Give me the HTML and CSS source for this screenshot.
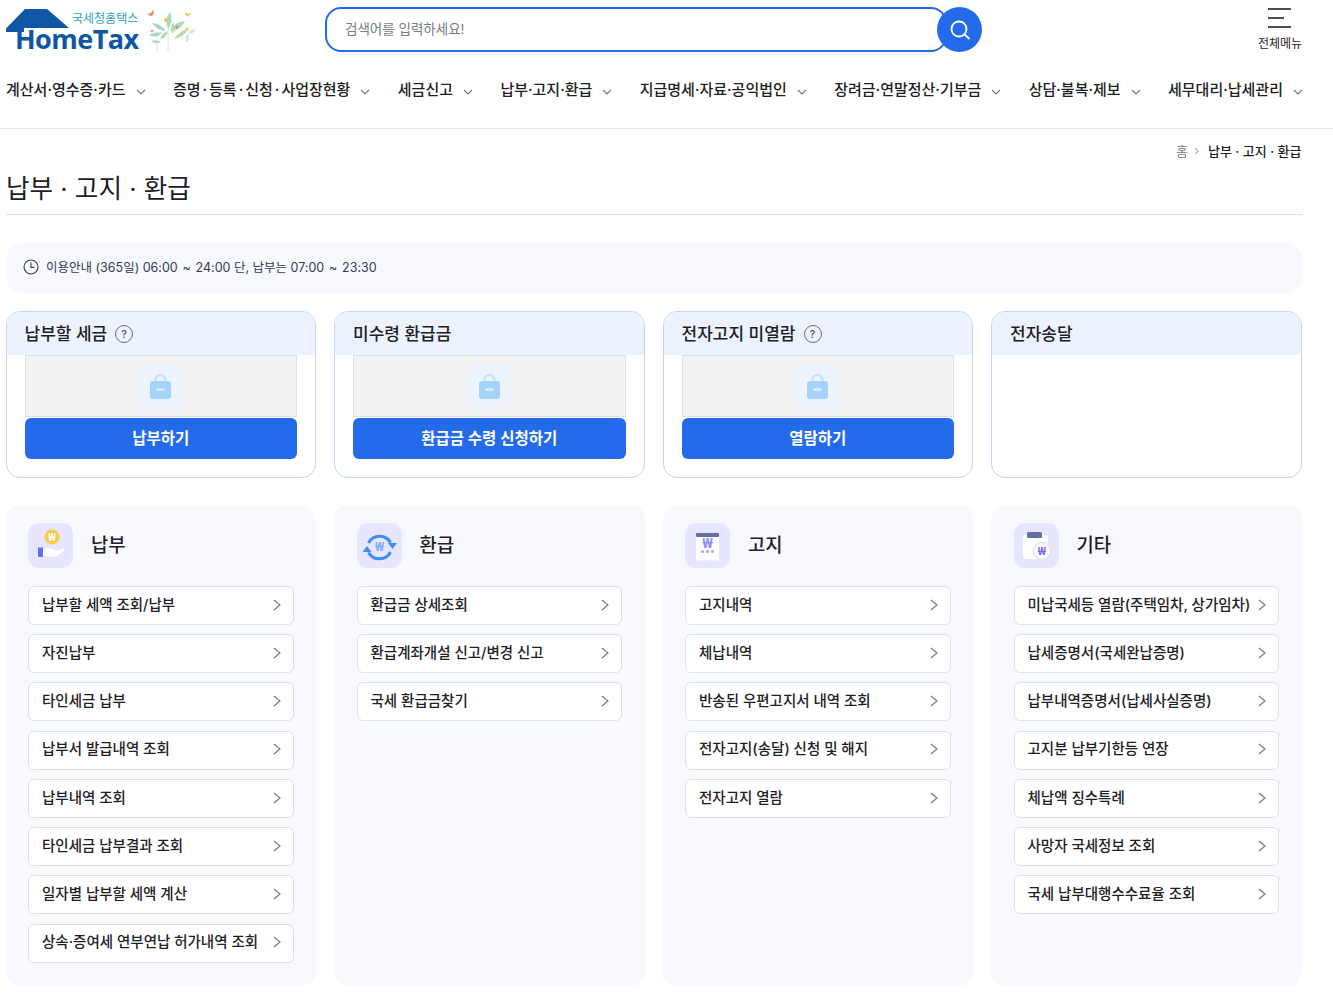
FILE: index.html
```html
<!DOCTYPE html>
<html lang="ko">
<head>
<meta charset="utf-8">
<title>납부 · 고지 · 환급</title>
<link rel="stylesheet" href="styles.css">
</head>
<body>
<header class="site-header">
  <div class="top-row">
    <a class="logo">
      <svg class="logo-roof" width="64" height="24" viewBox="0 0 64 24"><path d="M0 19.500 L19 0 H41 L63 19 H18 V23 H0 Z" fill="#0f56a5"/></svg>
      <span class="logo-sub">국세청홈택스</span>
      <span class="logo-main">HomeTax</span>
      <svg class="logo-plant" width="52" height="44" viewBox="0 0 52 44">
        <path d="M1 5 Q6 5 7 0 Q9 5 6 7 Q3 7 1 5Z" fill="#e58d6f"/>
        <path d="M39 3 Q42 6 45 4 Q43 8 41 7 Q39 6 39 3Z" fill="#f3c64c"/>
        <g fill="none" stroke="#d8e8e0" stroke-width="1"><path d="M22 42V20"/><path d="M36 30V18"/><path d="M11 42V24"/></g>
        <g fill="#a9d8c4"><path d="M6 14 Q14 14 20 22 Q12 22 6 14Z"/><path d="M22 20 Q18 10 24 3 Q28 12 22 20Z"/><path d="M24 22 Q30 12 39 12 Q34 22 24 22Z"/><path d="M3 26 Q10 22 16 24 Q10 30 3 26Z"/><path d="M5 32 Q11 30 15 33 Q10 36 5 32Z"/></g>
        <g fill="#b5d9a7"><path d="M14 30 Q16 24 22 22 Q20 29 14 30Z"/><path d="M28 30 Q34 22 42 20 Q38 28 28 30Z"/><path d="M26 25 Q24 18 27 13 Q31 19 26 25Z"/><path d="M40 34 Q38 28 42 24 Q45 30 40 34Z" fill="#cfe9e3"/><path d="M42 24 Q46 20 50 20 Q47 26 42 24Z" fill="#cfe9e3"/></g>
        <circle cx="20" cy="11" r="2" fill="#f2c344"/><circle cx="31" cy="18" r="1.6" fill="#e6877c"/><circle cx="41" cy="20" r="1.6" fill="#f2c344"/><circle cx="6" cy="22" r="1.6" fill="#d9a9c9"/>
      </svg>
    </a>
    <form class="search">
      <div class="search-box">검색어를 입력하세요!</div>
      <button class="search-btn" type="button" aria-label="검색">
        <svg width="24" height="24" viewBox="0 0 24 24" fill="none" stroke="#fff" stroke-width="1.8" stroke-linecap="round"><circle cx="11" cy="11" r="7.5"/><path d="M16.8 16.8L21 20.5"/></svg>
      </button>
    </form>
    <a class="all-menu">
      <svg width="24" height="20" viewBox="0 0 24 20" stroke="#222" stroke-width="1.6"><path d="M0 1H23"/><path d="M0 10H16"/><path d="M0 19H23"/></svg>
      <span>전체메뉴</span>
    </a>
  </div>
  <nav class="gnb">
    <a>계산서·영수증·카드<svg class="chev" viewBox="0 0 10 6"><path d="M1 1L5 5L9 1"/></svg></a>
    <a>증명<span class="dot">·</span>등록<span class="dot">·</span>신청<span class="dot">·</span>사업장현황<svg class="chev" viewBox="0 0 10 6"><path d="M1 1L5 5L9 1"/></svg></a>
    <a>세금신고<svg class="chev" viewBox="0 0 10 6"><path d="M1 1L5 5L9 1"/></svg></a>
    <a>납부·고지·환급<svg class="chev" viewBox="0 0 10 6"><path d="M1 1L5 5L9 1"/></svg></a>
    <a>지급명세·자료·공익법인<svg class="chev" viewBox="0 0 10 6"><path d="M1 1L5 5L9 1"/></svg></a>
    <a>장려금·연말정산·기부금<svg class="chev" viewBox="0 0 10 6"><path d="M1 1L5 5L9 1"/></svg></a>
    <a>상담·불복·제보<svg class="chev" viewBox="0 0 10 6"><path d="M1 1L5 5L9 1"/></svg></a>
    <a>세무대리·납세관리<svg class="chev" viewBox="0 0 10 6"><path d="M1 1L5 5L9 1"/></svg></a>
  </nav>
</header>
<main class="page">
  <div class="crumbs"><span class="home">홈</span><svg class="crumb-sep" viewBox="0 0 6 8"><path d="M1 1L4.5 4L1 7"/></svg><strong>납부 · 고지 · 환급</strong></div>
  <h1 class="page-title">납부 · 고지 · 환급</h1>
  <div class="notice">
    <svg width="16" height="16" viewBox="0 0 16 16" fill="none" stroke="#333c50" stroke-width="1.1"><circle cx="8" cy="8" r="7"/><path d="M8 3.6V8.4H11.4"/></svg>
    <span>이용안내 (365일) 06:00 <span class="tilde">~</span> 24:00 단, 납부는 07:00 <span class="tilde">~</span> 23:30</span>
  </div>
  <section class="summary">
    <article class="sum-card">
      <h2 class="sum-head">납부할 세금<span class="help">?</span></h2>
      <div class="sum-body">
        <div class="locked"><span class="lock"><svg width="21" height="26" viewBox="0 0 21 26"><path d="M5.5 10V7a5 5 0 0 1 10 0v3" fill="none" stroke="#c6e3f7" stroke-width="2.5"/><rect y="8" width="21" height="18" rx="3" fill="#a3d2fa"/><rect x="6" y="15" width="9" height="3" rx="1.5" fill="#d5eafc"/></svg></span></div>
        <a class="primary">납부하기</a>
      </div>
    </article>
    <article class="sum-card">
      <h2 class="sum-head">미수령 환급금</h2>
      <div class="sum-body">
        <div class="locked"><span class="lock"><svg width="21" height="26" viewBox="0 0 21 26"><path d="M5.5 10V7a5 5 0 0 1 10 0v3" fill="none" stroke="#c6e3f7" stroke-width="2.5"/><rect y="8" width="21" height="18" rx="3" fill="#a3d2fa"/><rect x="6" y="15" width="9" height="3" rx="1.5" fill="#d5eafc"/></svg></span></div>
        <a class="primary">환급금 수령 신청하기</a>
      </div>
    </article>
    <article class="sum-card">
      <h2 class="sum-head">전자고지 미열람<span class="help">?</span></h2>
      <div class="sum-body">
        <div class="locked"><span class="lock"><svg width="21" height="26" viewBox="0 0 21 26"><path d="M5.5 10V7a5 5 0 0 1 10 0v3" fill="none" stroke="#c6e3f7" stroke-width="2.5"/><rect y="8" width="21" height="18" rx="3" fill="#a3d2fa"/><rect x="6" y="15" width="9" height="3" rx="1.5" fill="#d5eafc"/></svg></span></div>
        <a class="primary">열람하기</a>
      </div>
    </article>
    <article class="sum-card">
      <h2 class="sum-head">전자송달</h2>
    </article>
  </section>
  <section class="panels">
    <article class="panel">
      <div class="panel-head">
        <span class="panel-icon"><svg width="45" height="45" viewBox="0 0 45 45">
          <circle cx="24" cy="14" r="7.5" fill="#fcc94f"/><text x="24" y="17.500" class="won won-w">₩</text>
          <rect x="10" y="24.500" width="5" height="9.500" fill="#5f73f1"/>
          <path d="M15 26 Q20 24.500 25 26.500 L29 27.500 L35.500 25.500 Q37 26 35.500 28 Q30 33 25 34 Q20 33.500 15 33Z" fill="#fff"/>
        </svg></span>
        <h3>납부</h3>
      </div>
      <ul class="links">
        <li><a>납부할 세액 조회/납부<svg class="arr" viewBox="0 0 8 12"><path d="M1 1L7 6L1 11"/></svg></a></li>
        <li><a>자진납부<svg class="arr" viewBox="0 0 8 12"><path d="M1 1L7 6L1 11"/></svg></a></li>
        <li><a>타인세금 납부<svg class="arr" viewBox="0 0 8 12"><path d="M1 1L7 6L1 11"/></svg></a></li>
        <li><a>납부서 발급내역 조회<svg class="arr" viewBox="0 0 8 12"><path d="M1 1L7 6L1 11"/></svg></a></li>
        <li><a>납부내역 조회<svg class="arr" viewBox="0 0 8 12"><path d="M1 1L7 6L1 11"/></svg></a></li>
        <li><a>타인세금 납부결과 조회<svg class="arr" viewBox="0 0 8 12"><path d="M1 1L7 6L1 11"/></svg></a></li>
        <li><a>일자별 납부할 세액 계산<svg class="arr" viewBox="0 0 8 12"><path d="M1 1L7 6L1 11"/></svg></a></li>
        <li><a>상속·증여세 연부연납 허가내역 조회<svg class="arr" viewBox="0 0 8 12"><path d="M1 1L7 6L1 11"/></svg></a></li>
      </ul>
    </article>
    <article class="panel">
      <div class="panel-head">
        <span class="panel-icon"><svg width="45" height="45" viewBox="0 0 45 45" fill="none">
          <path d="M11.500 20 A12.500 12.500 0 0 1 33.500 19.500" stroke="#3e8df0" stroke-width="3"/>
          <path d="M33.500 29 A12.500 12.500 0 0 1 11.500 29.500" stroke="#3e8df0" stroke-width="3"/>
          <path d="M31 20H40L35.500 26Z" fill="#3e8df0"/><path d="M5.500 29H14.500L10 23Z" fill="#3e8df0"/>
          <text x="22.500" y="28" class="won won-b">₩</text>
        </svg></span>
        <h3>환급</h3>
      </div>
      <ul class="links">
        <li><a>환급금 상세조회<svg class="arr" viewBox="0 0 8 12"><path d="M1 1L7 6L1 11"/></svg></a></li>
        <li><a>환급계좌개설 신고/변경 신고<svg class="arr" viewBox="0 0 8 12"><path d="M1 1L7 6L1 11"/></svg></a></li>
        <li><a>국세 환급금찾기<svg class="arr" viewBox="0 0 8 12"><path d="M1 1L7 6L1 11"/></svg></a></li>
      </ul>
    </article>
    <article class="panel">
      <div class="panel-head">
        <span class="panel-icon"><svg width="45" height="45" viewBox="0 0 45 45">
          <path d="M11 10H34V38L31 36.500 28 38 25 36.500 22 38 19 36.500 16 38 13 36.500 11 38Z" fill="#fff"/>
          <rect x="11" y="10" width="23" height="4" rx="1" fill="#666da3"/>
          <text x="22.500" y="25" class="won won-p">₩</text>
          <circle cx="17.500" cy="28.500" r="1.500" fill="#a9a4f6"/><circle cx="22.500" cy="28.500" r="1.500" fill="#a9a4f6"/><circle cx="27.500" cy="28.500" r="1.500" fill="#a9a4f6"/>
        </svg></span>
        <h3>고지</h3>
      </div>
      <ul class="links">
        <li><a>고지내역<svg class="arr" viewBox="0 0 8 12"><path d="M1 1L7 6L1 11"/></svg></a></li>
        <li><a>체납내역<svg class="arr" viewBox="0 0 8 12"><path d="M1 1L7 6L1 11"/></svg></a></li>
        <li><a>반송된 우편고지서 내역 조회<svg class="arr" viewBox="0 0 8 12"><path d="M1 1L7 6L1 11"/></svg></a></li>
        <li><a>전자고지(송달) 신청 및 해지<svg class="arr" viewBox="0 0 8 12"><path d="M1 1L7 6L1 11"/></svg></a></li>
        <li><a>전자고지 열람<svg class="arr" viewBox="0 0 8 12"><path d="M1 1L7 6L1 11"/></svg></a></li>
      </ul>
    </article>
    <article class="panel">
      <div class="panel-head">
        <span class="panel-icon"><svg width="45" height="45" viewBox="0 0 45 45">
          <rect x="9" y="12" width="25" height="24" rx="2" fill="#fff"/>
          <rect x="13" y="9" width="15" height="6" rx="1.500" fill="#666da3"/>
          <circle cx="28" cy="28" r="8.500" fill="#fff" stroke="#e3e3ee" stroke-width="1.500"/>
          <text x="28" y="32" class="won won-v">₩</text>
        </svg></span>
        <h3>기타</h3>
      </div>
      <ul class="links">
        <li><a>미납국세등 열람(주택임차, 상가임차)<svg class="arr" viewBox="0 0 8 12"><path d="M1 1L7 6L1 11"/></svg></a></li>
        <li><a>납세증명서(국세완납증명)<svg class="arr" viewBox="0 0 8 12"><path d="M1 1L7 6L1 11"/></svg></a></li>
        <li><a>납부내역증명서(납세사실증명)<svg class="arr" viewBox="0 0 8 12"><path d="M1 1L7 6L1 11"/></svg></a></li>
        <li><a>고지분 납부기한등 연장<svg class="arr" viewBox="0 0 8 12"><path d="M1 1L7 6L1 11"/></svg></a></li>
        <li><a>체납액 징수특례<svg class="arr" viewBox="0 0 8 12"><path d="M1 1L7 6L1 11"/></svg></a></li>
        <li><a>사망자 국세정보 조회<svg class="arr" viewBox="0 0 8 12"><path d="M1 1L7 6L1 11"/></svg></a></li>
        <li><a>국세 납부대행수수료율 조회<svg class="arr" viewBox="0 0 8 12"><path d="M1 1L7 6L1 11"/></svg></a></li>
      </ul>
    </article>
  </section>
</main>
</body>
</html>
```
FILE: styles.css
```css
* { box-sizing: border-box; }
html, body { margin: 0; padding: 0; }
body {
  font-family: "Inter", "Noto Sans CJK KR", sans-serif;
  color: #1e2124;
  background: #fff;
  height: 997px;
  overflow: hidden;
}
a { color: inherit; text-decoration: none; }
ul { list-style: none; margin: 0; padding: 0; }
h1, h2, h3 { margin: 0; font-weight: 500; }

.site-header { height: 129px; border-bottom: 1px solid #e1e2ea; padding: 0 30px 0 6px; }
.top-row { display: flex; align-items: flex-start; height: 71px; }
.logo { position: relative; display: block; width: 319px; height: 56px; }
.logo-roof { position: absolute; left: 0; top: 9px; }
.logo-sub { position: absolute; left: 66px; top: 11px; font-size: 12px; line-height: 16px; color: #2ea4c0; }
.logo-main { position: absolute; left: 9px; top: 27px; font-family: "Open Sans", sans-serif; font-weight: 700; font-size: 27px; line-height: 24px; color: #0f56a5; letter-spacing: -0.55px; }
.logo-plant { position: absolute; left: 140px; top: 9px; }

.search { display: flex; margin-top: 7px; width: 657px; }
.search-box {
  width: 622px; height: 45px; border: 2px solid #246beb; border-radius: 16px;
  padding-left: 18px; font-size: 13.500px; line-height: 41px; color: #767b85;
}
.search-btn {
  width: 45px; height: 45px; margin-left: -10px; border: 0; border-radius: 50%;
  background: #246beb; padding: 0; display: flex; align-items: center; justify-content: center;
  position: relative;
}
.all-menu { margin-left: auto; margin-top: 8px; width: 46px; display: flex; flex-direction: column; align-items: center; }
.all-menu svg { display: block; }
.all-menu span { font-size: 12px; line-height: 16px; margin-top: 8px; white-space: nowrap; letter-spacing: -0.1px; }

.gnb { display: flex; justify-content: space-between; height: 38px; align-items: center; }
.gnb a { display: flex; align-items: center; font-size: 15px; font-weight: 500; line-height: 22px; white-space: nowrap; color: #1e2124; }
.dot { margin: 0 2px; }
.chev { width: 10px; height: 6px; margin-left: 10px; margin-top: 3px; fill: none; stroke: #6f7480; stroke-width: 1.1; }

.page { padding: 0 31.500px 0 5.500px; }
.crumbs { display: flex; justify-content: flex-end; align-items: center; height: 43px; font-size: 13px; }
.crumbs .home { color: #767b85; }
.crumb-sep { width: 6px; height: 8px; margin: 0 8px 0 6px; fill: none; stroke: #858a94; stroke-width: 1; }
.crumbs strong { font-weight: 500; color: #1e2124; }
.page-title { font-size: 25.600px; font-weight: 400; line-height: 34px; height: 43px; border-bottom: 1px solid #dfe1e6; padding-bottom: 10px; padding-left: 0.500px; color: #1e2124; }

.notice {
  display: flex; align-items: center; gap: 7px; height: 50px; margin-top: 28px; padding-bottom: 2px;
  background: #f8f9ff; border-radius: 16px; padding-left: 17.500px; font-size: 12.500px; color: #333c50;
}
.notice > span { padding-bottom: 2px; }
.tilde { margin: 0 1.250px; }

.summary { display: grid; grid-template-columns: repeat(4, 1fr); column-gap: 18px; margin-top: 18px; height: 167px; }
.sum-card { border: 1px solid #c5d5ee; border-radius: 14px; overflow: hidden; background: #fff; }
.sum-head {
  height: 43px; background: #ecf2fe; padding-left: 18px; font-size: 17px; font-weight: 500; line-height: 44px;
  display: flex; align-items: center; gap: 8px; color: #1e2124;
}
.help {
  width: 18px; height: 18px; border: 1px solid #6f6f6f; border-radius: 50%; font-size: 11px; line-height: 16px;
  text-align: center; color: #555; font-weight: 500;
}
.sum-body { padding: 0 18px; }
.locked {
  height: 62px; background: #f3f3f3; border: 1px solid #e0e0e4; border-top-color: #dcdce2;
  display: flex; align-items: center; justify-content: center;
}
.lock { width: 45px; height: 45px; background: #eef4fd; border-radius: 12px; display: flex; align-items: center; justify-content: center; }
.primary {
  display: block; height: 41px; margin-top: 1px; background: #246beb; border-radius: 6px; color: #fff;
  font-size: 15.500px; font-weight: 600; line-height: 41px; text-align: center;
}

.panels { display: grid; grid-template-columns: repeat(4, 1fr); column-gap: 18px; margin-top: 27px; height: 481px; }
.panel { background: #f8f9ff; border-radius: 14px; padding: 18px 22.500px 0; }
.panel-head { display: flex; align-items: center; gap: 18px; height: 45px; }
.panel-head h3 { font-size: 18.800px; font-weight: 500; color: #1e2124; padding-bottom: 5px; }
.panel-icon { width: 45px; height: 45px; background: #e6e6ff; border-radius: 11px; display: block; }
.panel-icon svg { display: block; }
.won { text-anchor: middle; font-family: "Noto Sans", sans-serif; font-weight: 800; font-size: 10px; }
.won-w { fill: #fff; }
.won-b { fill: #7cb0f5; font-size: 12px; }
.won-p { fill: #8f8bf5; font-size: 14px; }
.won-v { fill: #7b61f0; font-size: 11px; }
.links { margin-top: 17.900px; display: flex; flex-direction: column; gap: 9.250px; }
.links a {
  display: flex; align-items: center; justify-content: space-between;
  height: 39px; background: #fff; border: 1px solid #dfe1ea; border-radius: 6px;
  padding: 0 12px 1.500px 13px; font-size: 14.500px; font-weight: 500; white-space: nowrap; color: #1e2124; line-height: 20px;
}
.arr { width: 8px; height: 12px; flex: none; fill: none; stroke: #6f7480; stroke-width: 1.1; }
```
